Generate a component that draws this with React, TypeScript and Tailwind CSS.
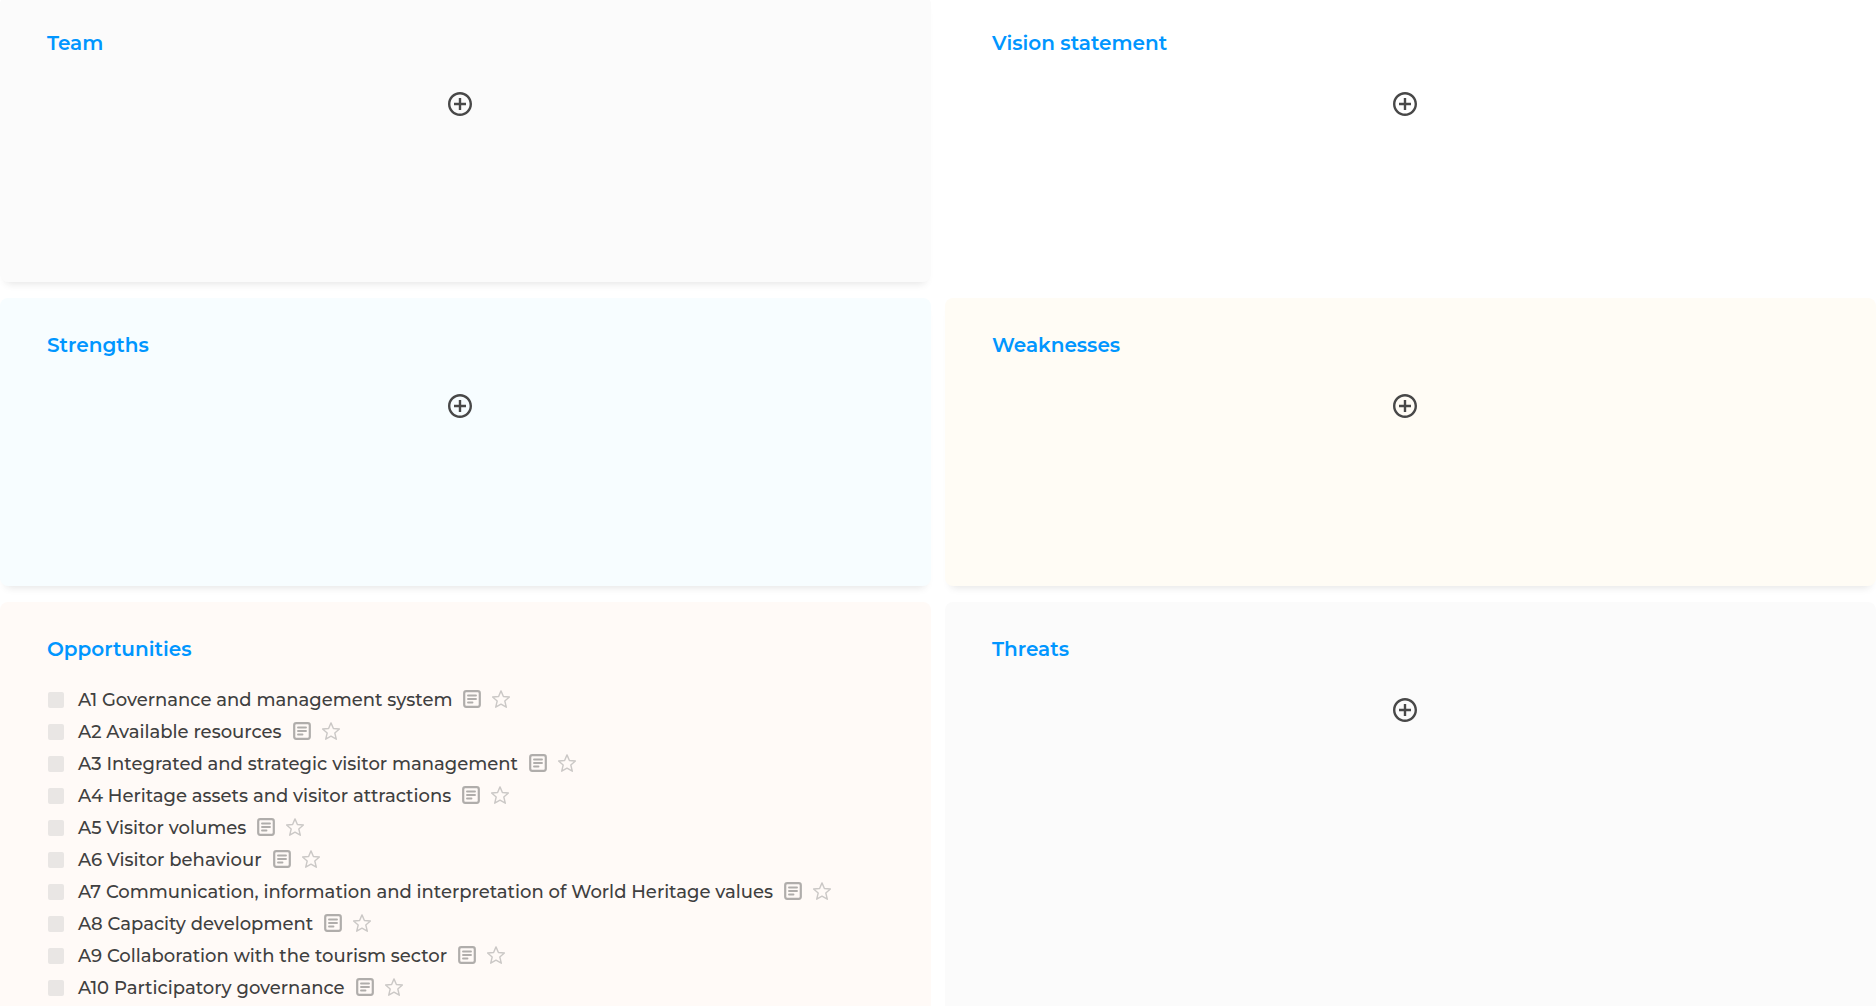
import React from "react";

type Item = { id: string; label: string };

const opportunities: Item[] = [
  { id: "A1", label: "Governance and management system" },
  { id: "A2", label: "Available resources" },
  { id: "A3", label: "Integrated and strategic visitor management" },
  { id: "A4", label: "Heritage assets and visitor attractions" },
  { id: "A5", label: "Visitor volumes" },
  { id: "A6", label: "Visitor behaviour" },
  { id: "A7", label: "Communication, information and interpretation of World Heritage values" },
  { id: "A8", label: "Capacity development" },
  { id: "A9", label: "Collaboration with the tourism sector" },
  { id: "A10", label: "Participatory governance" },
];

function AddButton({ label }: { label: string }) {
  return (
    <button type="button" aria-label={`Add to ${label}`} className="mx-auto mt-[37px] block size-6 text-[#484848]">
      <svg viewBox="2 2 20 20" className="size-6" fill="currentColor" aria-hidden="true">
        <path d="M13 7h-2v4H7v2h4v4h2v-4h4v-2h-4V7zm-1-5C6.48 2 2 6.48 2 12s4.48 10 10 10 10-4.48 10-10S17.52 2 12 2zm0 18c-4.41 0-8-3.59-8-8s3.59-8 8-8 8 3.59 8 8-3.59 8-8 8z" />
      </svg>
    </button>
  );
}

function NoteIcon() {
  return (
    <svg viewBox="0 0 18 18" className="size-[18px]" fill="none" stroke="currentColor" aria-hidden="true">
      <rect x="1.200" y="1.200" width="15.600" height="15.600" rx="2" strokeWidth="2.200" />
      <path d="M5 5.500h8M5 9h8M5 12.500h4.500" strokeWidth="1.900" strokeLinecap="round" />
    </svg>
  );
}

function StarIcon() {
  return (
    <svg viewBox="0 0 18 18" className="size-[18px]" fill="none" stroke="currentColor" aria-hidden="true">
      <path
        d="M9 .9l2.400 5.600 6 .5-4.600 4 1.500 6.200L9 14.200l-5.300 3L5.200 11 .6 7l6-.5z"
        strokeWidth="1.400"
        strokeLinejoin="round"
      />
    </svg>
  );
}

function ItemRow({ item }: { item: Item }) {
  const inputId = `item-${item.id}`;
  return (
    <li className="flex h-8 items-center">
      <input
        id={inputId}
        type="checkbox"
        className="ml-px size-4 shrink-0 appearance-none rounded-xs bg-[#e9e6e4] checked:bg-[#0096ff]"
      />
      <label htmlFor={inputId} className="ml-3.5 text-lg leading-6 font-medium text-[#404040]">
        {item.id} {item.label}
      </label>
      <button type="button" aria-label={`Notes for ${item.id}`} className="mb-0.5 ml-[11px] text-[#b0adab]">
        <NoteIcon />
      </button>
      <button type="button" aria-label={`Favourite ${item.id}`} className="mb-0.5 ml-[11px] text-[#cbc8c6]">
        <StarIcon />
      </button>
    </li>
  );
}

function Panel({ title, className, children }: { title: string; className: string; children?: React.ReactNode }) {
  return (
    <section className={`rounded-lg pt-[35px] pr-[58px] pl-[47px] ${className}`}>
      <h2 className="text-xl leading-6 font-semibold text-[#0096ff]">{title}</h2>
      {children ?? <AddButton label={title} />}
    </section>
  );
}

export default function App() {
  return (
    <div className="h-screen overflow-hidden bg-white font-['Montserrat','Open_Sans',sans-serif]">
      <main className="-mt-1 grid grid-cols-2 gap-x-3.5 gap-y-4">
        <Panel title="Team" className="min-h-[286px] bg-[#fbfbfb] shadow-[0_7px_8px_-6px_rgba(0,0,0,0.12)]" />
        <Panel title="Vision statement" className="bg-white" />
        <Panel title="Strengths" className="min-h-[288px] bg-[#f7fdff] shadow-[0_7px_8px_-6px_rgba(0,0,0,0.12)]" />
        <Panel title="Weaknesses" className="bg-[#fffcf5] shadow-[0_7px_8px_-6px_rgba(0,0,0,0.12)]" />
        <Panel title="Opportunities" className="bg-[#fffaf7] pb-12">
          <ul className="mt-[23px]">
            {opportunities.map((item) => (
              <ItemRow key={item.id} item={item} />
            ))}
          </ul>
        </Panel>
        <Panel title="Threats" className="bg-[#fbfbfb]" />
      </main>
    </div>
  );
}
